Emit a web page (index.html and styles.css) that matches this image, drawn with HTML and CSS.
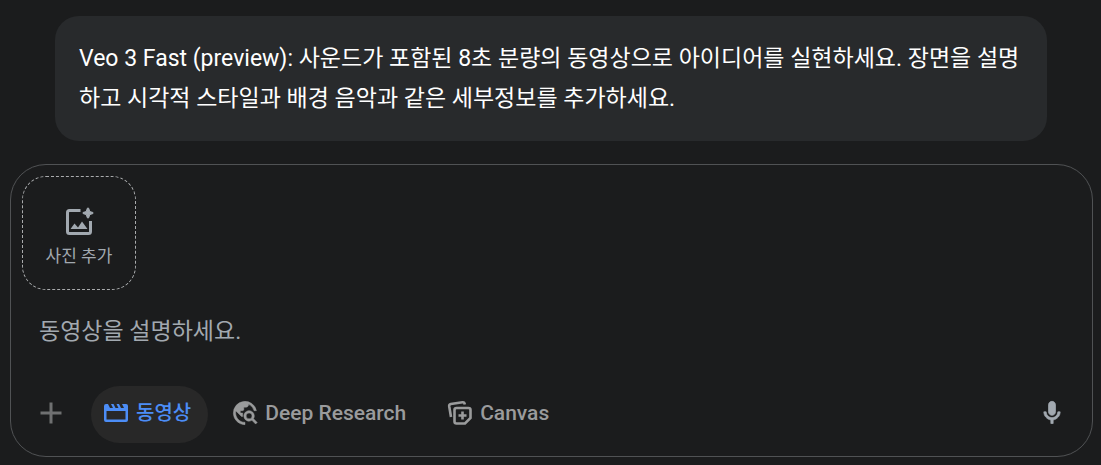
FILE: index.html
```html
<!DOCTYPE html>
<html lang="ko">
<head>
<meta charset="utf-8">
<meta name="viewport" content="width=device-width, initial-scale=1">
<title>동영상</title>
<link rel="stylesheet" href="styles.css">
</head>
<body>
<main class="page">
  <p class="notice">Veo 3 Fast (preview): 사운드가 포함된 8초 분량의 동영상으로 아이디어를 실현하세요. 장면을 설명하고 시각적 스타일과 배경 음악과 같은 세부정보를 추가하세요.</p>
  <form class="composer">
    <button class="photo" type="button">
      <svg class="icon-photo" viewBox="0 0 28 28" aria-hidden="true">
        <path d="M15.500 2.500H4.500Q2.500 2.500 2.500 4.500V23.500Q2.500 25.500 4.500 25.500H23.500Q25.500 25.500 25.500 23.500V13" fill="none" stroke="currentColor" stroke-width="3"/>
        <path d="M5.500 21l4-5.500 3.500 4 4-6 5.500 7.500z"/>
        <path d="M22.500 0h1l1.400 3.600L28 4.500v1l-3.100 1.100L23.500 10h-1l-1.400-3.400L18 5.500v-1l3.100-.900z" stroke="currentColor"/>
      </svg>
      <span>사진 추가</span>
    </button>
    <textarea class="prompt" rows="1" placeholder="동영상을 설명하세요." aria-label="동영상을 설명하세요."></textarea>
    <div class="toolbar">
      <button class="tool add" type="button" aria-label="추가">
        <svg class="icon" viewBox="0 0 28 28" aria-hidden="true"><path d="M12.500 3.500h3v9h9v3h-9v9h-3v-9h-9v-3h9z"/></svg>
      </button>
      <button class="tool selected" type="button" aria-pressed="true">
        <svg class="icon" viewBox="0 0 28 28" aria-hidden="true"><path fill-rule="evenodd" d="M4 5h2l2 4h3L9 5h2.500l2 4h3l-2-4H17l2 4h3l-2-4H24q2 0 2 2v14q0 2-2 2H4q-2 0-2-2V7q0-2 2-2zM4.500 12v8.500h19V12z"/></svg>
        <span>동영상</span>
      </button>
      <button class="tool research" type="button">
        <svg class="icon" viewBox="0 0 24 24" aria-hidden="true"><path stroke="currentColor" stroke-width=".4" d="M19.300 16.900c.4-.7.7-1.500.7-2.400 0-2.500-2-4.500-4.500-4.500S11 12 11 14.500s2 4.500 4.500 4.500c.9 0 1.700-.3 2.400-.7l3.200 3.200 1.400-1.400zm-3.800.1a2.500 2.500 0 1 1 0-5 2.500 2.500 0 0 1 0 5zM12 20v2a10 10 0 1 1 9.800-12h-2.070A8 8 0 0 0 15 4.590V5c0 1.100-.9 2-2 2h-2v2c0 .550-.450 1-1 1H8v2h2v3H9l-4.790-4.790A8 8 0 0 0 12 20z"/></svg>
        <span>Deep Research</span>
      </button>
      <button class="tool canvas" type="button">
        <svg class="icon" viewBox="0 0 28 28" aria-hidden="true">
          <g fill="none" stroke="currentColor" stroke-width="2.600">
            <path d="M5 18L3.200 7.200Q3 5.400 4.800 5L16.500 3.200Q18.500 3 18.800 5.500"/>
            <path d="M10.500 9H22.500Q24.500 9 24.500 11V19L19 24.500H10.500Q8.500 24.500 8.500 22.500V11Q8.500 9 10.500 9z"/>
            <path d="M16.500 12.500v8M12.500 16.500h8"/>
          </g>
        </svg>
        <span>Canvas</span>
      </button>
      <button class="tool mic" type="button" aria-label="마이크">
        <svg class="icon" viewBox="0 0 24 24" aria-hidden="true"><path stroke="currentColor" stroke-width=".6" d="M12 14c1.660 0 3-1.340 3-3V5c0-1.660-1.340-3-3-3S9 3.340 9 5v6c0 1.660 1.340 3 3 3zM17 11c0 2.760-2.240 5-5 5s-5-2.240-5-5H5c0 3.530 2.610 6.430 6 6.920V21h2v-3.080c3.390-.490 6-3.390 6-6.920z"/></svg>
      </button>
    </div>
  </form>
</main>
</body>
</html>
```
FILE: styles.css
```css
* { box-sizing: border-box; }

body {
  margin: 0;
  background: #1b1c1d;
  color: #fff;
  font-family: Roboto, "Noto Sans CJK KR", sans-serif;
}

button, textarea {
  margin: 0;
  border: 0;
  background: none;
  font: inherit;
}

svg { fill: currentColor; flex: none; overflow: visible; }

.page {
  display: flex;
  flex-direction: column;
  gap: 23px;
  padding: 16px 8px 8px 10px;
}

.notice {
  margin: 0 46px 0 45px;
  padding: 23px 24px 22px;
  border-radius: 24px;
  background: #282a2c;
  font-size: 23px;
  line-height: 40px;
}

.composer {
  display: flex;
  flex-direction: column;
  padding: 11px 11px 13px;
  border: 1px solid #505254;
  border-radius: 36px;
}

.photo {
  display: flex;
  flex-direction: column;
  align-items: center;
  justify-content: center;
  gap: 8px;
  width: 114px;
  height: 114px;
  padding: 10px 0 0;
  border: 1px dashed #a9abad;
  border-radius: 24px;
  color: #a2a9b0;
  font-size: 17px;
  line-height: 24px;
}

.icon-photo { width: 28px; height: 28px; }

.prompt {
  height: 40px;
  margin: 22px 0 34px;
  padding: 0 17px;
  color: #fff;
  font-size: 23px;
  line-height: 40px;
  resize: none;
  overflow: hidden;
  outline: 0;
}

.prompt::placeholder { color: #a2a9b0; opacity: 1; }

.toolbar {
  display: flex;
  align-items: center;
  padding-left: 1px;
}

.tool {
  display: flex;
  align-items: center;
  gap: 6px;
  height: 57px;
  padding: 0 15px 3px 11px;
  border-radius: 29px;
  color: #9a9b9c;
  font-size: 21px;
  font-weight: 500;
  line-height: 28px;
  white-space: nowrap;
}

.icon { width: 28px; height: 28px; }

.add { margin-right: 12px; padding: 0 14px 3px; color: #6f7071; }

.selected { margin-right: 12px; padding-right: 17px; background: #282828; color: #4c8df6; font-size: 20px; }

.research { margin-right: 14px; }

.mic { margin-left: auto; padding: 0 15px 3px; color: #a2a9b0; }
```
